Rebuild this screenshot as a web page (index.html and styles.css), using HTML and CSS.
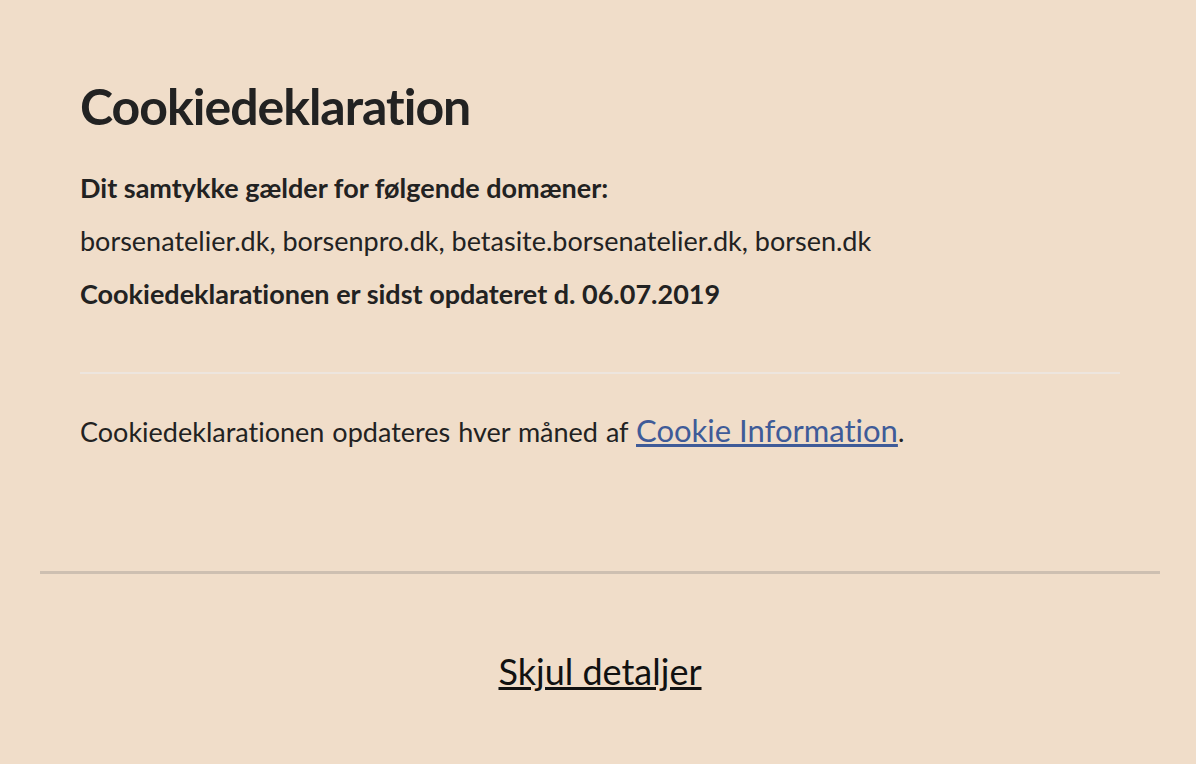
FILE: index.html
```html
<!DOCTYPE html>
<html lang="da">
<head>
<meta charset="utf-8">
<title>Cookiedeklaration</title>
<link rel="stylesheet" href="styles.css">
</head>
<body>
<div class="panel">
  <section class="declaration">
    <h1 class="title">Cookiedeklaration</h1>
    <p class="label">Dit samtykke gælder for følgende domæner:</p>
    <p class="domains">borsenatelier.dk, borsenpro.dk, betasite.borsenatelier.dk, borsen.dk</p>
    <p class="label">Cookiedeklarationen er sidst opdateret d. 06.07.2019</p>
    <hr class="divider">
    <p class="updated">Cookiedeklarationen opdateres hver måned af <a class="ci-link" href="#">Cookie Information</a>.</p>
  </section>
  <footer class="footer">
    <a class="toggle" href="#">Skjul detaljer</a>
  </footer>
</div>
</body>
</html>
```
FILE: styles.css
```css
html, body {
  margin: 0;
  padding: 0;
  background: #f0ddc9;
}
body {
  font-family: Lato, "Open Sans", sans-serif;
  font-variant-ligatures: none;
  color: #222222;
}
.panel {
  width: 1196px;
  padding: 0 36px 0 40px;
  box-sizing: border-box;
}
.declaration {
  padding: 75px 40px 119px 40px;
  border-bottom: 3px solid #cdbfb1;
}
.title {
  margin: 0 0 24px 0;
  font-size: 50px;
  line-height: 62px;
  letter-spacing: -1px;
  font-weight: 700;
  color: #222222;
}
.label {
  margin: 0;
  font-size: 27px;
  line-height: 53px;
  font-weight: 700;
}
.domains {
  margin: 0;
  font-size: 27px;
  line-height: 53px;
}
.divider {
  margin: 52px 0 0 0;
  border: none;
  border-top: 2px solid #ede5de;
  height: 0;
}
.updated {
  margin: 38px 0 0 0;
  font-size: 27px;
  line-height: 40px;
  word-spacing: 1px;
}
.ci-link {
  color: #3f5b98;
  font-size: 31px;
  line-height: 1;
  word-spacing: 0;
  text-decoration: underline;
}
.footer {
  display: flex;
  justify-content: center;
  padding-top: 75px;
}
.toggle {
  color: #111111;
  font-size: 36px;
  line-height: 44px;
  text-decoration: underline;
}
```
